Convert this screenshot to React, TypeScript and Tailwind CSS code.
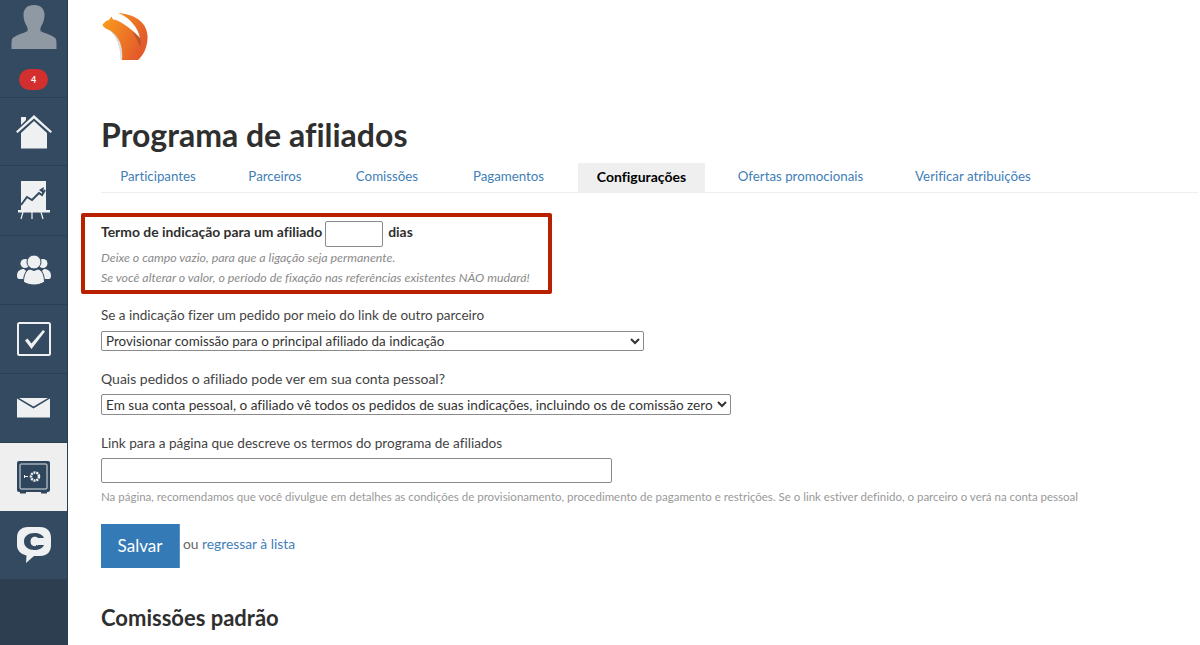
const navBorder = "border-b border-[#2b3e52]";

function Avatar() {
  return (
    <svg width="46" height="45" viewBox="0 0 46 50" preserveAspectRatio="none">
      <path
        d="M23 0c-7 0-10.500 4.500-10.500 11 0 4 1 8 2.500 11 1.200 2.500 2 4 1.500 7-3 2.500-14 5-15.500 9-.6 2-.5 6-.5 11h45c0-5 .1-9-.5-11-1.500-4-12.500-6.500-15.500-9-.5-3 .3-4.500 1.500-7 1.500-3 2.500-7 2.500-11C33.500 4.500 30 0 23 0z"
        fill="#8f99a3"
      />
    </svg>
  );
}

function HomeIcon() {
  return (
    <svg width="36" height="34" viewBox="0 0 36 34">
      <path d="M5 2h5v3l-5 5z" fill="#eef0f1" />
      <path d="M0 16.500 18 0l18 16.500-1.500 1.500L18 3.500 1.500 18z" fill="#eef0f1" />
      <path d="M5 18 18 6l13 12v15.500H5z" fill="#eef0f1" />
    </svg>
  );
}

function ChartIcon() {
  return (
    <svg width="32" height="39" viewBox="0 0 32 39">
      <rect x="3" y="0" width="25" height="30" fill="#eef0f1" />
      <rect x="0" y="29" width="32" height="2.500" fill="#eef0f1" />
      <path d="M3 38l2-7M14 38v-7M25 38l-2-7" stroke="#eef0f1" strokeWidth="1.200" fill="none" />
      <path d="M3 24l6-8 5 3 7-7 3 2 3-5" stroke="#344a61" strokeWidth="2" fill="none" />
      <path d="M26 6l-1 6-4-3z" fill="#344a61" />
    </svg>
  );
}

function PeopleIcon() {
  return (
    <svg width="34" height="30" viewBox="0 0 34 30">
      <circle cx="8" cy="8.500" r="4.500" fill="#eef0f1" />
      <circle cx="26" cy="8.500" r="4.500" fill="#eef0f1" />
      <path d="M0 21c0-5 3-7 7-7l2 2-2 8-5 0c-1 0-2-1-2-3zM34 21c0-5-3-7-7-7l-2 2 2 8 5 0c1 0 2-1 2-3z" fill="#eef0f1" />
      <circle cx="17" cy="7" r="7" fill="#eef0f1" stroke="#344a61" strokeWidth="1" />
      <path d="M6.500 27c0-7 2.500-12 6.500-13l4 1.500 4-1.500c4 1 6.500 6 6.500 13-3 2-7 3-10.500 3s-7.500-1-10.500-3z" fill="#eef0f1" stroke="#344a61" strokeWidth="1" />
    </svg>
  );
}

function CheckIcon() {
  return (
    <svg width="34" height="34" viewBox="0 0 34 34">
      <rect x="1" y="1" width="32" height="32" rx="1.500" fill="none" stroke="#eef0f1" strokeWidth="2" />
      <path d="M8 18.500l2.500-2 4 5L26 8l2 1.500L14.500 27z" fill="#eef0f1" />
    </svg>
  );
}

function MailIcon() {
  return (
    <svg width="33" height="20" viewBox="0 0 33 20">
      <path d="M0 .5l16.500 10L33 .5v19H0z" fill="#eef0f1" />
      <path d="M2 0h29L16.500 8.500z" fill="#eef0f1" />
    </svg>
  );
}

function SafeIcon() {
  return (
    <svg width="33" height="33" viewBox="0 0 33 33">
      <rect x="0" y="0" width="33" height="31" rx="2" fill="#2f455c" />
      <path d="M3 30h6v2.500H3zM24 30h6v2.500h-6z" fill="#2f455c" />
      <rect x="3" y="3" width="27" height="25" rx="1" fill="none" stroke="#dfe3e6" strokeWidth="1" />
      <circle cx="18" cy="15.500" r="4" fill="none" stroke="#eef0f1" strokeWidth="2.500" strokeDasharray="2 .8" />
      <circle cx="18" cy="15.500" r="2" fill="#2f455c" />
      <path d="M7 15.500h4M7.500 14v3" stroke="#eef0f1" strokeWidth="1" />
    </svg>
  );
}

function ChatIcon() {
  return (
    <svg width="34" height="37" viewBox="0 0 34 37">
      <path
        d="M11 0h12c7 0 11 4 11 11v7c0 7-4 11-11 11h-6l-8 7 .5-7.500C3.500 27 0 23.500 0 18v-7C0 4 4 0 11 0z"
        fill="#eef0f1"
      />
      <path
        d="M27 11C25.500 7.500 22 6 17.500 6 11.500 6 7 9 7 14.500S11.500 23 17.500 23c4.500 0 8-1.500 9.500-5h-6c-.7.800-1.900 1.200-3.300 1.200-2.500 0-4.200-1.900-4.200-4.700s1.700-4.700 4.200-4.700c1.400 0 2.600.4 3.300 1.200z"
        fill="#344a61"
      />
    </svg>
  );
}

function Logo() {
  return (
    <svg width="48" height="48" viewBox="0 0 48 48">
      <defs>
        <linearGradient id="fox" x1="0" y1="0" x2="1" y2="0.500">
          <stop offset="0" stopColor="#fba01c" />
          <stop offset="1" stopColor="#e35a2b" />
        </linearGradient>
      </defs>
      <path d="M9 16c5 2 9 7 11 14 1 5 1 10 1 17l-1.500 0C19.500 34 16 23 7 16z" fill="#dcdcdc" />
      <path
        d="M17 0C32 1 46 8 46.500 23 47 34 42 43 37 47H21C22 38 20 29 16 24 13 20 10 17.500 7 16.500 4 15.500 1.500 13 1.500 11.500L5 8l3-1 2.500-3.500L12 6.500l3 .5C22 10 31 16 39 25 37 14 28 4 17 0z"
        fill="url(#fox)"
      />
      <path d="M31 18.500C34 20.500 37 23 39 25c1 3 1 6 0 9-1.500-5-4.500-10.500-8-15.500z" fill="#a8502c" opacity=".75" />
    </svg>
  );
}

const navItems = [
  { icon: <HomeIcon />, h: "h-[68px]" },
  { icon: <ChartIcon />, h: "h-[70px]" },
  { icon: <PeopleIcon />, h: "h-[69px]" },
  { icon: <CheckIcon />, h: "h-[69px]" },
  { icon: <MailIcon />, h: "h-[69px]" },
];

const tabs = [
  { label: "Participantes", w: "w-[114px]" },
  { label: "Parceiros", w: "w-[94px]" },
  { label: "Comissões", w: "w-[104px]" },
  { label: "Pagamentos", w: "w-[113px]" },
  { label: "Configurações", w: "w-[127px]", active: true },
  { label: "Ofertas promocionais", w: "w-[165px]" },
  { label: "Verificar atribuições", w: "w-[154px]" },
];

export default function App() {
  return (
    <div className="flex h-[645px] w-[1200px] overflow-hidden bg-white font-['Lato',sans-serif] text-[14px] text-[#333] [font-variant-ligatures:none]">
      <aside className="flex w-[68px] shrink-0 flex-col border-r border-[#2b3e52] bg-[#2c3e50]">
        <div className="flex h-[62px] justify-center bg-[#344a61] pt-[5px]">
          <Avatar />
        </div>
        <div className={`flex h-[36px] items-center justify-center bg-[#344a61] ${navBorder}`}>
          <span className="flex h-[21px] w-[29px] items-center justify-center rounded-full bg-[#d32f2f] text-[9px] font-bold text-white">
            4
          </span>
        </div>
        {navItems.map((item, i) => (
          <div key={i} className={`flex ${item.h} items-center justify-center bg-[#344a61] ${navBorder}`}>
            {item.icon}
          </div>
        ))}
        <div className="flex h-[68px] items-center justify-center bg-[#efefef]">
          <SafeIcon />
        </div>
        <div className="flex h-[68px] items-center justify-center bg-[#344a61]">
          <ChatIcon />
        </div>
      </aside>

      <main className="min-w-0 flex-1 pl-[33px]">
        <div className="flex h-[108px] items-start pt-[13px]">
          <Logo />
        </div>
        <h1 className="h-[55px] pb-[2px] text-[32px] leading-[53px] font-bold text-[#2f2f2f]">Programa de afiliados</h1>

        <nav className="mr-[2px] flex h-[30px] gap-[13px] border-b border-[#eeeeee]">
          {tabs.map((t) => (
            <a
              key={t.label}
              className={`${t.w} flex items-center justify-center pb-[2px] ${
                t.active ? "bg-[#efefef] text-[14px] font-bold text-black" : "text-[13.3px] text-[#3f80b8]"
              }`}
            >
              {t.label}
            </a>
          ))}
        </nav>

        <section className="relative mt-[27px]">
          <div className="flex h-[28px] items-center text-[13.9px] font-bold text-[#2f2f2f]">
            <span className="pb-[3px]">Termo de indicação para um afiliado</span>
            <input className="mr-[5px] ml-[3px] h-[26px] w-[58px] rounded-[2px] border border-[#8a8a8a] bg-white" />
            <span className="pb-[3px]">dias</span>
          </div>
          <p className="text-[12.4px] leading-[20px] text-[#8a8a8a] italic">
            Deixe o campo vazio, para que a ligação seja permanente.
          </p>
          <p className="text-[12.4px] leading-[20px] text-[#8a8a8a] italic">
            Se você alterar o valor, o período de fixação nas referências existentes NÃO mudará!
          </p>
          <div className="absolute top-[-7px] left-[-20px] h-[81px] w-[471px] rounded-[2px] border-[4px] border-[#b92000]" />
        </section>

        <label className="mt-[17px] block text-[13.5px] leading-[20px] text-[#444]">Se a indicação fizer um pedido por meio do link de outro parceiro</label>
        <select className="mt-[6px] block h-[20px] w-[543px] rounded-[2px] border border-[#8a8a8a] bg-white text-[13.4px] leading-[18px] text-[#333]">
          <option>Provisionar comissão para o principal afiliado da indicação</option>
        </select>

        <label className="mt-[18px] block leading-[20px] text-[#444]">Quais pedidos o afiliado pode ver em sua conta pessoal?</label>
        <select className="mt-[5px] block h-[21px] w-[630px] rounded-[2px] border border-[#8a8a8a] bg-white text-[13.6px] leading-[18px] text-[#333]">
          <option>Em sua conta pessoal, o afiliado vê todos os pedidos de suas indicações, incluindo os de comissão zero</option>
        </select>

        <label className="mt-[18px] block text-[13.6px] leading-[20px] text-[#444]">Link para a página que descreve os termos do programa de afiliados</label>
        <input className="mt-[5px] block h-[25px] w-[511px] rounded-[2px] border border-[#8a8a8a] bg-white" />
        <p className="mt-[4px] text-[11.5px] leading-[20px] whitespace-nowrap text-[#999]">
          Na página, recomendamos que você divulgue em detalhes as condições de provisionamento, procedimento de pagamento e restrições. Se o link estiver definido, o parceiro o verá na conta pessoal
        </p>

        <div className="mt-[17px] flex items-center">
          <button className="h-[44px] w-[79px] border-r border-[#5b93c4] bg-[#337ab7] pb-[1px] text-[17px] text-white">Salvar</button>
          <span className="ml-[3px] pb-[3px] text-[13.8px] text-[#666]">
            ou <a className="text-[#3f80b8]">regressar à lista</a>
          </span>
        </div>

        <h2 className="mt-[36px] text-[22px] leading-[28px] font-bold text-[#2f2f2f]">Comissões padrão</h2>
      </main>
    </div>
  );
}
